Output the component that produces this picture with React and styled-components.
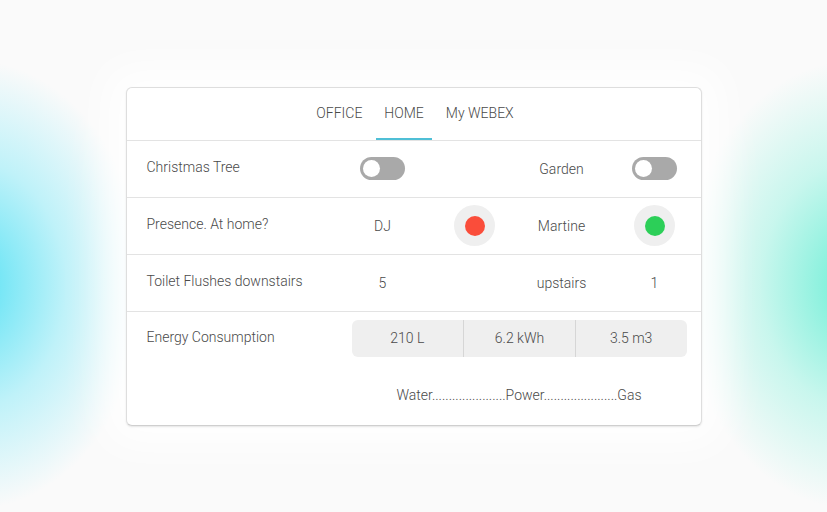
import React from "react";
import styled, { createGlobalStyle } from "styled-components";

const Global = createGlobalStyle`
  html, body { margin: 0; padding: 0; }
  body {
    font-family: Roboto, "Liberation Sans", Arial, sans-serif;
    font-weight: 300;
    color: #4a4a4a;
  }
`;

const Page = styled.div`
  width: 827px;
  height: 512px;
  display: flex;
  align-items: center;
  justify-content: center;
  background:
    radial-gradient(ellipse 175px 225px at -30px 285px, rgba(78, 224, 244, 0.95), rgba(120, 232, 248, 0.45) 55%, rgba(255, 255, 255, 0) 100%),
    radial-gradient(ellipse 175px 225px at 857px 285px, rgba(100, 238, 212, 0.95), rgba(140, 242, 222, 0.45) 55%, rgba(255, 255, 255, 0) 100%),
    #fafafa;
  overflow: hidden;
`;

const Card = styled.div`
  width: 576px;
  height: 339px;
  box-sizing: border-box;
  background: #fff;
  border: 1px solid #dedede;
  border-bottom-color: #cfcfcf;
  border-radius: 6px;
  box-shadow: 0 1px 2px rgba(0, 0, 0, 0.1), 0 0 40px 20px rgba(255, 255, 255, 0.9);
  display: flex;
  flex-direction: column;
  overflow: hidden;
`;

const Tabs = styled.div`
  height: 53px;
  flex: none;
  display: flex;
  justify-content: center;
  align-items: stretch;
  gap: 6px;
  border-bottom: 1px solid #e3e3e3;
  box-sizing: border-box;
  padding-left: 3px;
`;

const Tab = styled.div`
  display: flex;
  align-items: center;
  padding: 1px 8px 0;
  font-size: 14px;
  color: #4a4a4a;
  border-bottom: 2px solid ${(p) => (p.$active ? "#4fbfd6" : "transparent")};
  box-sizing: border-box;
`;

const Row = styled.div`
  display: grid;
  grid-template-columns: 184px 104px 80px 94px 92px;
  align-items: center;
  flex: none;
  height: 57px;
  padding-left: 20px;
  border-bottom: 1px solid #e3e3e3;
  box-sizing: border-box;
  font-size: 14px;
`;

const Label = styled.div`
  padding-bottom: 4px;
`;

const Cell = styled.div`
  justify-self: center;
`;

const Track = styled.div`
  width: 45px;
  height: 23px;
  border-radius: 12px;
  background: #a9a9a9;
  box-sizing: border-box;
  padding: 3px;
  display: flex;
  align-items: center;
`;

const Knob = styled.div`
  width: 17px;
  height: 17px;
  border-radius: 50%;
  background: #fff;
`;

const Toggle = () => (
  <Track>
    <Knob />
  </Track>
);

const DotWrap = styled.div`
  width: 41px;
  height: 41px;
  border-radius: 50%;
  background: #efefef;
  display: flex;
  align-items: center;
  justify-content: center;
`;

const Dot = styled.div`
  width: 20px;
  height: 20px;
  border-radius: 50%;
  background: ${(p) => p.$color};
`;

const EnergyRow = styled.div`
  display: grid;
  grid-template-columns: 205px 1fr;
  padding: 8px 14px 0 20px;
  flex: 1;
  font-size: 14px;
`;

const EnergyLabel = styled.div`
  height: 37px;
  display: flex;
  align-items: center;
  padding-bottom: 2px;
  box-sizing: border-box;
`;

const EnergyRight = styled.div`
  display: flex;
  flex-direction: column;
  align-items: center;
`;

const Segments = styled.div`
  width: 335px;
  height: 37px;
  display: grid;
  grid-template-columns: repeat(3, 1fr);
  background: #efefef;
  border-radius: 6px;
`;

const Segment = styled.div`
  display: flex;
  align-items: center;
  justify-content: center;
  border-left: ${(p) => (p.$first ? "none" : "1px solid #d6d6d6")};
`;

const Legend = styled.div`
  margin-top: 30px;
  white-space: nowrap;
`;

export default function App() {
  const dots = ".".repeat(22);
  return (
    <>
      <Global />
      <Page>
        <Card>
          <Tabs>
            <Tab>OFFICE</Tab>
            <Tab $active>HOME</Tab>
            <Tab>My WEBEX</Tab>
          </Tabs>
          <Row>
            <Label>Christmas Tree</Label>
            <Cell><Toggle /></Cell>
            <Cell />
            <Cell>Garden</Cell>
            <Cell><Toggle /></Cell>
          </Row>
          <Row>
            <Label>Presence. At home?</Label>
            <Cell>DJ</Cell>
            <Cell><DotWrap><Dot $color="#fa4d3a" /></DotWrap></Cell>
            <Cell>Martine</Cell>
            <Cell><DotWrap><Dot $color="#2ccf58" /></DotWrap></Cell>
          </Row>
          <Row>
            <Label>Toilet Flushes downstairs</Label>
            <Cell>5</Cell>
            <Cell />
            <Cell>upstairs</Cell>
            <Cell>1</Cell>
          </Row>
          <EnergyRow>
            <EnergyLabel>Energy Consumption</EnergyLabel>
            <EnergyRight>
              <Segments>
                <Segment $first>210 L</Segment>
                <Segment>6.2 kWh</Segment>
                <Segment>3.5 m3</Segment>
              </Segments>
              <Legend>Water{dots}Power{dots}Gas</Legend>
            </EnergyRight>
          </EnergyRow>
        </Card>
      </Page>
    </>
  );
}
